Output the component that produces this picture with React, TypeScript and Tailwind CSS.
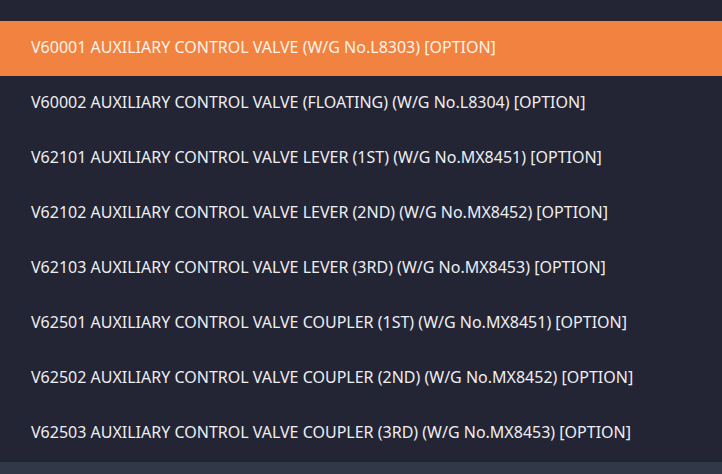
const items = [
  'V60001 AUXILIARY CONTROL VALVE (W/G No.L8303) [OPTION]',
  'V60002 AUXILIARY CONTROL VALVE (FLOATING) (W/G No.L8304) [OPTION]',
  'V62101 AUXILIARY CONTROL VALVE LEVER (1ST) (W/G No.MX8451) [OPTION]',
  'V62102 AUXILIARY CONTROL VALVE LEVER (2ND) (W/G No.MX8452) [OPTION]',
  'V62103 AUXILIARY CONTROL VALVE LEVER (3RD) (W/G No.MX8453) [OPTION]',
  'V62501 AUXILIARY CONTROL VALVE COUPLER (1ST) (W/G No.MX8451) [OPTION]',
  'V62502 AUXILIARY CONTROL VALVE COUPLER (2ND) (W/G No.MX8452) [OPTION]',
  'V62503 AUXILIARY CONTROL VALVE COUPLER (3RD) (W/G No.MX8453) [OPTION]',
]

export default function App() {
  return (
    <div className="w-[722px] h-[474px] bg-[#313847] overflow-hidden font-['Noto_Sans',sans-serif]">
      <ul className="bg-[#232534] pt-[21px] pb-px">
        {items.map((item, i) => (
          <li
            key={item}
            className={
              i === 0
                ? 'h-[55px] flex items-center pl-[31px] pb-[3px] bg-[#f28240] text-[#fff3ea] text-[16px]'
                : 'h-[55px] flex items-center pl-[31px] pb-[3px] text-[#eeeef2] text-[16px]'
            }
          >
            {item}
          </li>
        ))}
      </ul>
    </div>
  )
}
